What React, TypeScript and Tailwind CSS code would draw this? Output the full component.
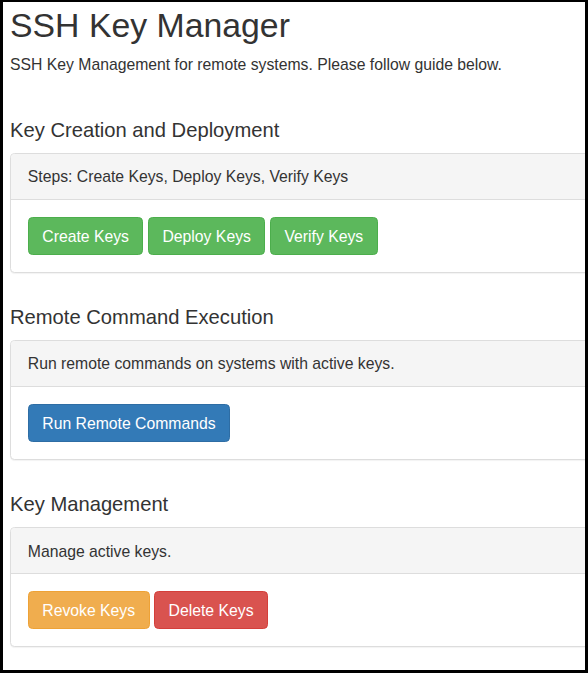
type Btn = {
  label: string
  cls: string
}

type Section = {
  title: string
  note: string
  buttons: Btn[]
}

const success = "bg-[#5cb85c] border-[#4cae4c]"

const sections: Section[] = [
  {
    title: "Key Creation and Deployment",
    note: "Steps: Create Keys, Deploy Keys, Verify Keys",
    buttons: [
      { label: "Create Keys", cls: success },
      { label: "Deploy Keys", cls: success },
      { label: "Verify Keys", cls: success },
    ],
  },
  {
    title: "Remote Command Execution",
    note: "Run remote commands on systems with active keys.",
    buttons: [{ label: "Run Remote Commands", cls: "bg-[#337ab7] border-[#2e6da4]" }],
  },
  {
    title: "Key Management",
    note: "Manage active keys.",
    buttons: [
      { label: "Revoke Keys", cls: "bg-[#f0ad4e] border-[#eea236]" },
      { label: "Delete Keys", cls: "bg-[#d9534f] border-[#d43f3a]" },
    ],
  },
]

function Panel({ s }: { s: Section }) {
  return (
    <div>
      <h4 className="text-[20.2px] leading-[22px] mb-[12px] font-normal">{s.title}</h4>
      <div className="rounded-[4.5px] border border-[#ddd] bg-white shadow-[0_1px_1px_rgba(0,0,0,0.05)]">
        <div className="rounded-t-[4px] border-b border-[#ddd] bg-[#f5f5f5] px-[16.8px] pt-[12.4px] pb-[10px]">
          {s.note}
        </div>
        <div className="flex gap-[4.5px] p-[16.8px]">
          {s.buttons.map((b) => (
            <button
              key={b.label}
              className={`rounded-[4.5px] border px-[13.5px] pt-[8px] pb-[5.6px] text-[15.75px] leading-[22.5px] text-white ${b.cls}`}
            >
              {b.label}
            </button>
          ))}
        </div>
      </div>
    </div>
  )
}

export default function App() {
  return (
    <div className="w-[588px] h-[673px] bg-black pt-[2px] pl-[3px] pr-[3px] pb-[3px]">
      <div
        className="h-full w-full overflow-hidden bg-white text-[#333] text-[15.75px] leading-[22.5px]"
        style={{ fontFamily: '"Liberation Sans", Arial, Helvetica, sans-serif' }}
      >
        <div className="w-[640px] pl-[7px]">
          <h2 className="mt-[5px] mb-[-1px] text-[33.8px] leading-[37px] font-normal">SSH Key Manager</h2>
          <p className="mt-[11px]">SSH Key Management for remote systems. Please follow guide below.</p>
          <div className="mt-[42.5px] flex flex-col gap-[33.5px]">
            {sections.map((s) => (
              <Panel key={s.title} s={s} />
            ))}
          </div>
        </div>
      </div>
    </div>
  )
}
